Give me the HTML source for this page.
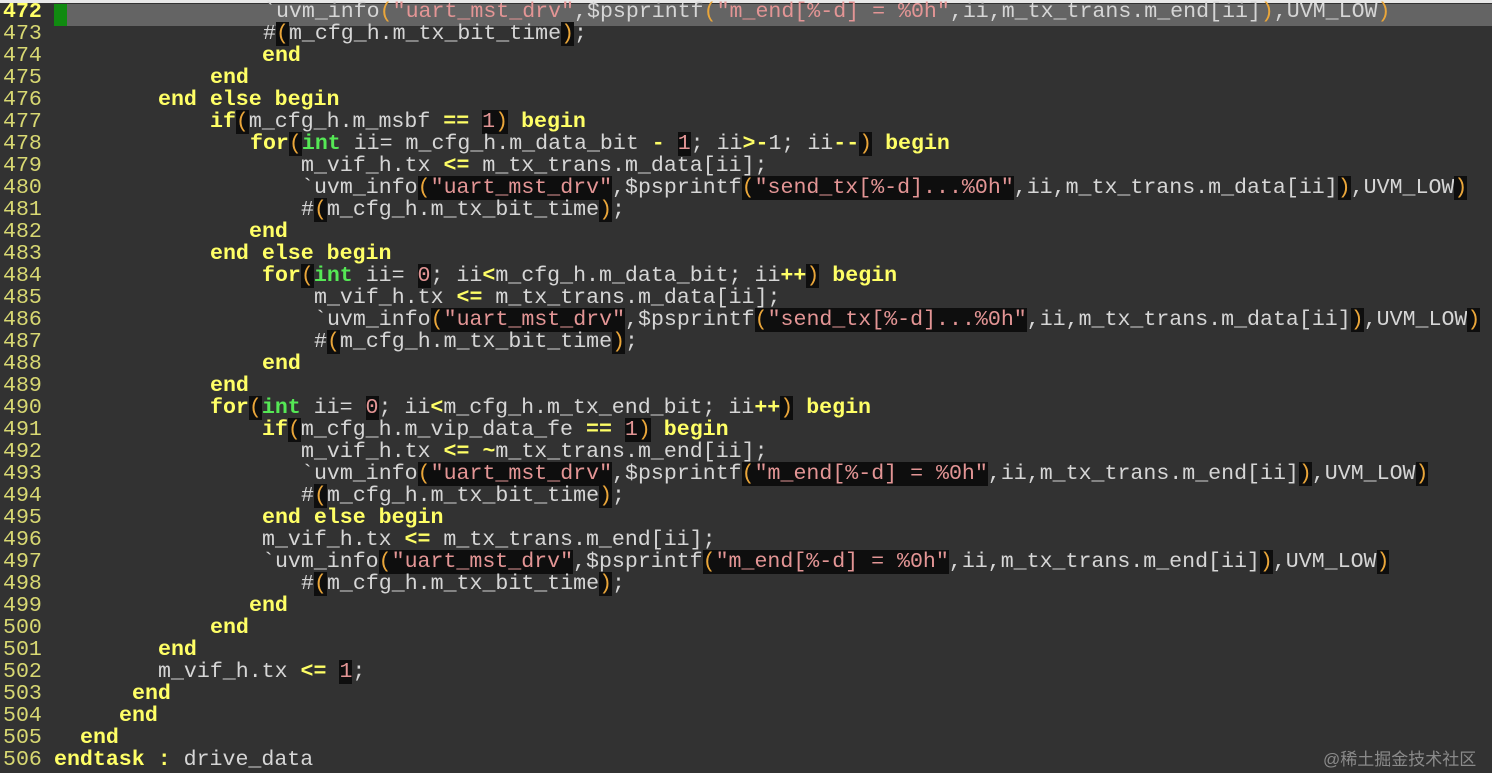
<!DOCTYPE html>
<html><head><meta charset="utf-8"><style>
html,body{margin:0;padding:0}
body{width:1492px;height:773px;background:#323232;position:relative;overflow:hidden;font-family:"Liberation Mono",monospace;font-size:21.6px;color:#d6d6d6}
.l{position:absolute;height:22px;line-height:22px;white-space:pre;margin-top:1px}
.ln{position:absolute;left:3px;height:22px;line-height:22px;color:#d8d872;margin-top:1px}
.k{color:#ffff66;font-weight:bold}
.g{color:#55e855;font-weight:bold}
.s{color:#e39595}
.p{color:#eaa63a}
.b{background:#0e0e0e}
#top{position:absolute;left:0;top:0;width:1492px;height:3px;background:#e8e8e8}
#hl{position:absolute;left:67px;top:4px;width:1425px;height:22px;background:#646464}
#gr{position:absolute;left:54px;top:4px;width:13px;height:22px;background:#108a10}
#wm{position:absolute;left:1323px;top:745px;font-family:"Liberation Sans","Noto Sans CJK SC",sans-serif;font-size:17px;color:#8a8a8a}
</style></head><body>
<div id="top"></div><div id="hl"></div><div id="gr"></div>
<div class="ln k" style="top:0;color:#ffff66">472</div>
<div class="ln" style="top:22px">473</div>
<div class="ln" style="top:44px">474</div>
<div class="ln" style="top:66px">475</div>
<div class="ln" style="top:88px">476</div>
<div class="ln" style="top:110px">477</div>
<div class="ln" style="top:132px">478</div>
<div class="ln" style="top:154px">479</div>
<div class="ln" style="top:176px">480</div>
<div class="ln" style="top:198px">481</div>
<div class="ln" style="top:220px">482</div>
<div class="ln" style="top:242px">483</div>
<div class="ln" style="top:264px">484</div>
<div class="ln" style="top:286px">485</div>
<div class="ln" style="top:308px">486</div>
<div class="ln" style="top:330px">487</div>
<div class="ln" style="top:352px">488</div>
<div class="ln" style="top:374px">489</div>
<div class="ln" style="top:396px">490</div>
<div class="ln" style="top:418px">491</div>
<div class="ln" style="top:440px">492</div>
<div class="ln" style="top:462px">493</div>
<div class="ln" style="top:484px">494</div>
<div class="ln" style="top:506px">495</div>
<div class="ln" style="top:528px">496</div>
<div class="ln" style="top:550px">497</div>
<div class="ln" style="top:572px">498</div>
<div class="ln" style="top:594px">499</div>
<div class="ln" style="top:616px">500</div>
<div class="ln" style="top:638px">501</div>
<div class="ln" style="top:660px">502</div>
<div class="ln" style="top:682px">503</div>
<div class="ln" style="top:704px">504</div>
<div class="ln" style="top:726px">505</div>
<div class="ln" style="top:748px">506</div>

<div class="l" style="top:0;left:263px">`uvm_info<span class="p">(</span><span class="s">"uart_mst_drv"</span>,$psprintf<span class="p">(</span><span class="s">"m_end[%-d] = %0h"</span>,ii,m_tx_trans.m_end[ii]<span class="p">)</span>,UVM_LOW<span class="p">)</span></div>
<div class="l" style="top:22px;left:263px">#<span class="p b">(</span>m_cfg_h.m_tx_bit_time<span class="p b">)</span>;</div>
<div class="l k" style="top:44px;left:262px">end</div>
<div class="l k" style="top:66px;left:210px">end</div>
<div class="l k" style="top:88px;left:158px">end else begin</div>
<div class="l" style="top:110px;left:210px"><span class="k">if</span><span class="p b">(</span>m_cfg_h.m_msbf <span class="k">==</span> <span class="b"><span class="s">1</span><span class="p">)</span></span> <span class="k">begin</span></div>
<div class="l" style="top:132px;left:250px"><span class="k">for</span><span class="p b">(</span><span class="g">int</span> ii= m_cfg_h.m_data_bit <span class="k">-</span> <span class="s b">1</span>; ii<span class="k">&gt;-</span>1; ii<span class="k">--</span><span class="p b">)</span> <span class="k">begin</span></div>
<div class="l" style="top:154px;left:301px">m_vif_h.tx <span class="k">&lt;=</span> m_tx_trans.m_data[ii];</div>
<div class="l" style="top:176px;left:301px">`uvm_info<span class="b"><span class="p">(</span><span class="s">"uart_mst_drv"</span></span>,$psprintf<span class="b"><span class="p">(</span><span class="s">"send_tx[%-d]...%0h"</span></span>,ii,m_tx_trans.m_data[ii]<span class="p b">)</span>,UVM_LOW<span class="p b">)</span></div>
<div class="l" style="top:198px;left:301px">#<span class="p b">(</span>m_cfg_h.m_tx_bit_time<span class="p b">)</span>;</div>
<div class="l k" style="top:220px;left:249px">end</div>
<div class="l k" style="top:242px;left:210px">end else begin</div>
<div class="l" style="top:264px;left:262px"><span class="k">for</span><span class="p b">(</span><span class="g">int</span> ii= <span class="s b">0</span>; ii<span class="k">&lt;</span>m_cfg_h.m_data_bit; ii<span class="k">++</span><span class="p b">)</span> <span class="k">begin</span></div>
<div class="l" style="top:286px;left:314px">m_vif_h.tx <span class="k">&lt;=</span> m_tx_trans.m_data[ii];</div>
<div class="l" style="top:308px;left:314px">`uvm_info<span class="b"><span class="p">(</span><span class="s">"uart_mst_drv"</span></span>,$psprintf<span class="b"><span class="p">(</span><span class="s">"send_tx[%-d]...%0h"</span></span>,ii,m_tx_trans.m_data[ii]<span class="p b">)</span>,UVM_LOW<span class="p b">)</span></div>
<div class="l" style="top:330px;left:314px">#<span class="p b">(</span>m_cfg_h.m_tx_bit_time<span class="p b">)</span>;</div>
<div class="l k" style="top:352px;left:262px">end</div>
<div class="l k" style="top:374px;left:210px">end</div>
<div class="l" style="top:396px;left:210px"><span class="k">for</span><span class="p b">(</span><span class="g">int</span> ii= <span class="s b">0</span>; ii<span class="k">&lt;</span>m_cfg_h.m_tx_end_bit; ii<span class="k">++</span><span class="p b">)</span> <span class="k">begin</span></div>
<div class="l" style="top:418px;left:262px"><span class="k">if</span><span class="p b">(</span>m_cfg_h.m_vip_data_fe <span class="k">==</span> <span class="b"><span class="s">1</span><span class="p">)</span></span> <span class="k">begin</span></div>
<div class="l" style="top:440px;left:301px">m_vif_h.tx <span class="k">&lt;=</span> <span class="k">~</span>m_tx_trans.m_end[ii];</div>
<div class="l" style="top:462px;left:301px">`uvm_info<span class="b"><span class="p">(</span><span class="s">"uart_mst_drv"</span></span>,$psprintf<span class="b"><span class="p">(</span><span class="s">"m_end[%-d] = %0h"</span></span>,ii,m_tx_trans.m_end[ii]<span class="p b">)</span>,UVM_LOW<span class="p b">)</span></div>
<div class="l" style="top:484px;left:301px">#<span class="p b">(</span>m_cfg_h.m_tx_bit_time<span class="p b">)</span>;</div>
<div class="l k" style="top:506px;left:262px">end else begin</div>
<div class="l" style="top:528px;left:262px">m_vif_h.tx <span class="k">&lt;=</span> m_tx_trans.m_end[ii];</div>
<div class="l" style="top:550px;left:262px">`uvm_info<span class="b"><span class="p">(</span><span class="s">"uart_mst_drv"</span></span>,$psprintf<span class="b"><span class="p">(</span><span class="s">"m_end[%-d] = %0h"</span></span>,ii,m_tx_trans.m_end[ii]<span class="p b">)</span>,UVM_LOW<span class="p b">)</span></div>
<div class="l" style="top:572px;left:301px">#<span class="p b">(</span>m_cfg_h.m_tx_bit_time<span class="p b">)</span>;</div>
<div class="l k" style="top:594px;left:249px">end</div>
<div class="l k" style="top:616px;left:210px">end</div>
<div class="l k" style="top:638px;left:158px">end</div>
<div class="l" style="top:660px;left:158px">m_vif_h.tx <span class="k">&lt;=</span> <span class="s b">1</span>;</div>
<div class="l k" style="top:682px;left:132px">end</div>
<div class="l k" style="top:704px;left:119px">end</div>
<div class="l k" style="top:726px;left:80px">end</div>
<div class="l" style="top:748px;left:54px"><span class="k">endtask</span> <span class="k">:</span> drive_data</div>
<div id="wm">@稀土掘金技术社区</div>
</body></html>
